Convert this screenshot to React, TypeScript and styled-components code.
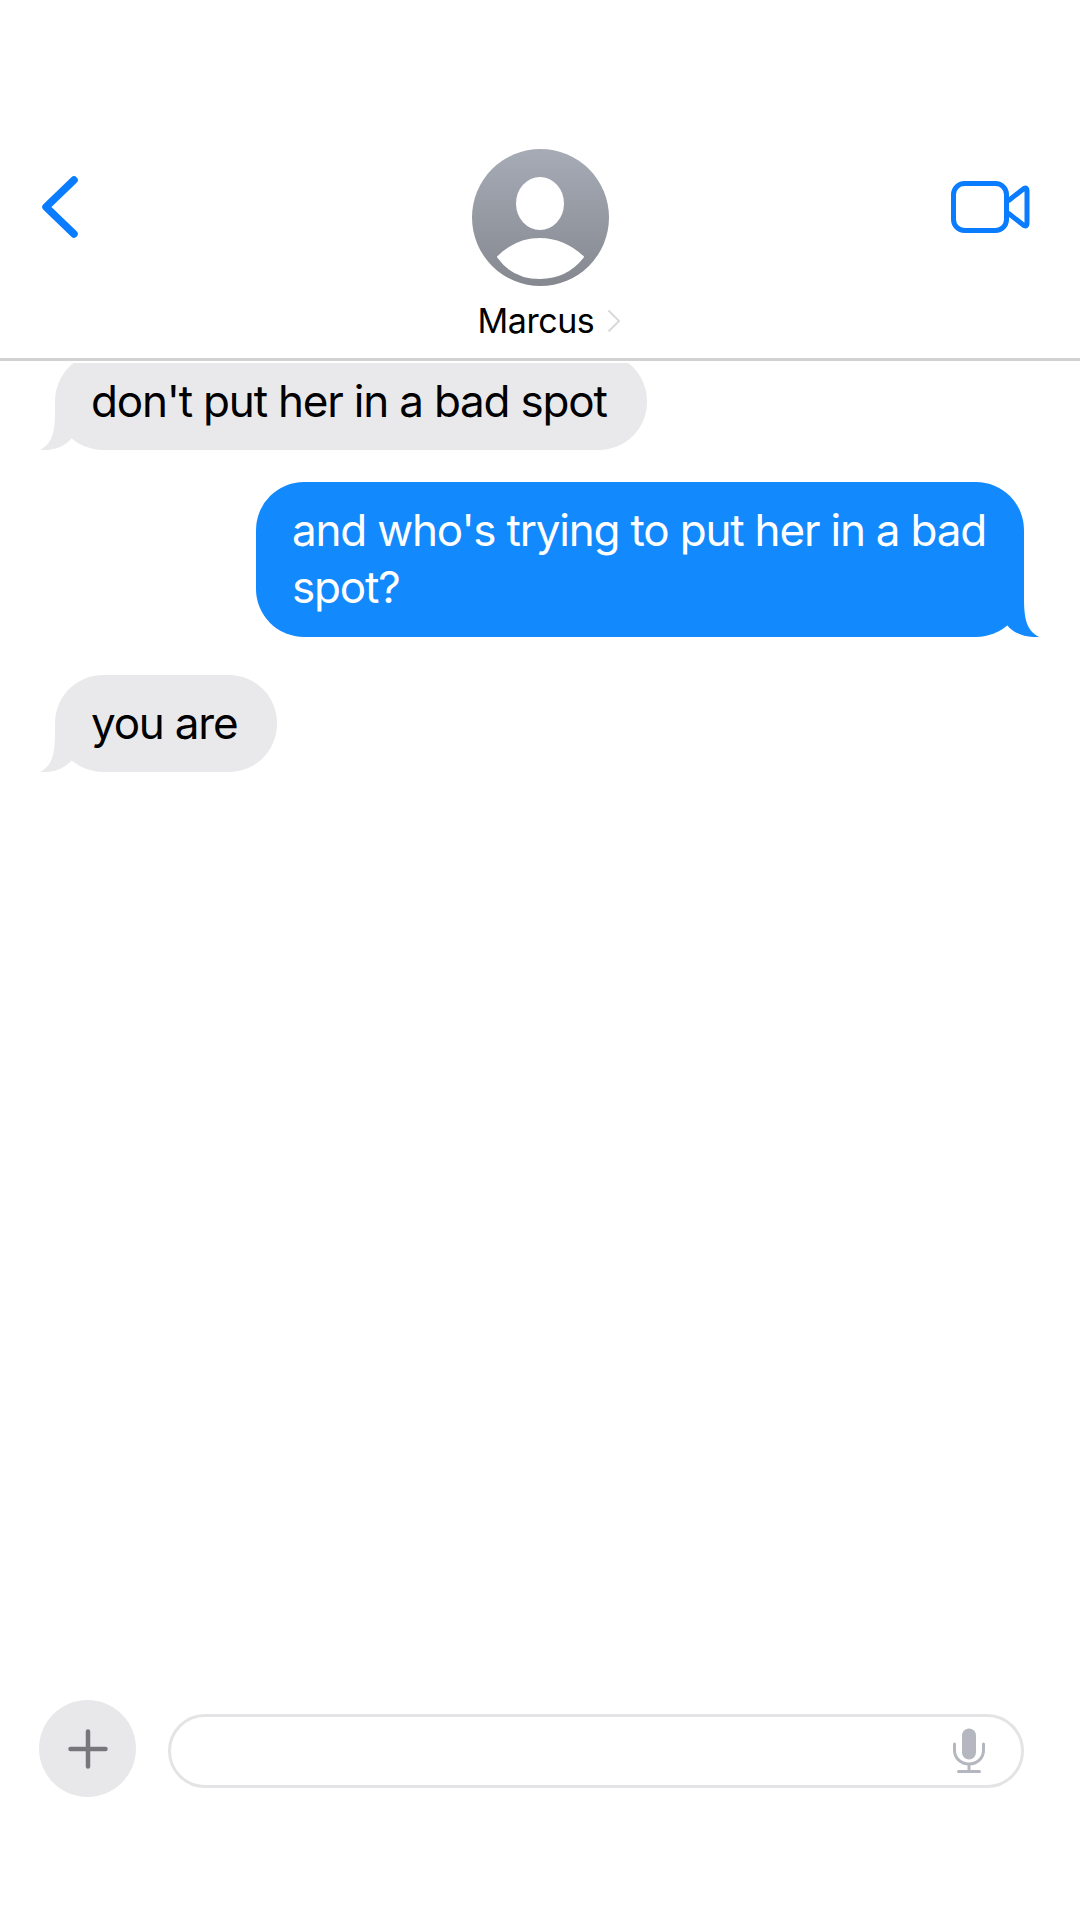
import React from "react";
import styled, { createGlobalStyle } from "styled-components";

const Global = createGlobalStyle`
  html, body { margin: 0; padding: 0; background: #fff; }
  body { font-family: Inter, "Liberation Sans", sans-serif; }
`;

const Screen = styled.main`
  width: 1080px;
  height: 1920px;
  display: flex;
  flex-direction: column;
  background: #fff;
  overflow: hidden;
`;

const Header = styled.header`
  height: 358px;
  box-sizing: border-box;
  padding-top: 149px;
  display: grid;
  grid-template-columns: 1fr 137px 1fr;
  align-items: start;
  flex: none;
`;

const Divider = styled.hr`
  height: 3px;
  margin: 0;
  border: 0;
  background: #d2d2d2;
  flex: none;
`;

const BackButton = styled.button`
  justify-self: start;
  width: 48px;
  height: 70px;
  margin: 23px 0 0 37px;
  padding: 0;
  border: 0;
  background: none;
  display: block;
`;

const VideoButton = styled.button`
  justify-self: end;
  width: 84px;
  height: 58px;
  margin: 28px 49px 0 0;
  padding: 0;
  border: 0;
  background: none;
  display: block;
`;

const Icon = styled.svg`
  display: block;
`;

const Contact = styled.div`
  display: flex;
  flex-direction: column;
`;

const Avatar = styled.div`
  width: 137px;
  height: 137px;
  border-radius: 50%;
  background: linear-gradient(180deg, #a6abb6 0%, #85888f 100%);
  overflow: hidden;
`;

const NameRow = styled.div`
  display: flex;
  align-items: center;
  margin: 15px 0 0 6px;
  height: 40px;
  white-space: nowrap;
`;

const Name = styled.span`
  font-size: 34px;
  letter-spacing: -0.45px;
  line-height: 40px;
  color: #000;
`;

const Chevron = styled.svg`
  display: block;
  margin-left: 13px;
  flex: none;
`;

const Thread = styled.section`
  flex: 1;
  min-height: 0;
  overflow: hidden;
  margin-top: 2px;
  display: flex;
  flex-direction: column;
`;

const Bubble = styled.div<{ $mine?: boolean; $gap: number }>`
  position: relative;
  flex: none;
  box-sizing: border-box;
  max-width: 768px;
  margin-top: ${(p) => p.$gap}px;
  padding: 20px ${(p) => (p.$mine ? 38 : 40)}px ${(p) => (p.$mine ? 21 : 20)}px 36px;
  border-radius: 48px;
  align-self: ${(p) => (p.$mine ? "flex-end" : "flex-start")};
  margin-left: ${(p) => (p.$mine ? 0 : 55)}px;
  margin-right: ${(p) => (p.$mine ? 56 : 0)}px;
  background: ${(p) => (p.$mine ? "#1389fe" : "#e9e9eb")};
  color: ${(p) => (p.$mine ? "#fff" : "#000")};
  font-size: 44px;
  letter-spacing: -1.2px;
  line-height: 57px;
`;

const Tail = styled.svg<{ $mine?: boolean }>`
  position: absolute;
  bottom: 0;
  width: 40px;
  height: 48px;
  ${(p) => (p.$mine ? "right: -15px; transform: scaleX(-1);" : "left: -15px;")}
`;

const Composer = styled.footer`
  flex: none;
  height: 220px;
  box-sizing: border-box;
  padding: 0 56px 0 39px;
  display: flex;
  align-items: flex-start;
  gap: 32px;
`;

const AddButton = styled.button`
  width: 97px;
  height: 97px;
  flex: none;
  padding: 0;
  border: 0;
  border-radius: 50%;
  background: #e8e8ea;
  display: flex;
  align-items: center;
  justify-content: center;
`;

const Field = styled.div`
  flex: 1;
  height: 74px;
  margin-top: 14px;
  box-sizing: border-box;
  border: 3px solid #e4e4e6;
  border-radius: 37px;
  background: #fff;
  display: flex;
  align-items: center;
  justify-content: flex-end;
  padding-right: 36px;
`;

function BubbleTail({ color, mine }: { color: string; mine?: boolean }) {
  return (
    <Tail $mine={mine} viewBox="0 0 40 48">
      <path
        d="M15 0 C15 24 15.5 40 0 48 C11 48.6 24 46 32 36 L40 28 L40 0 Z"
        fill={color}
      />
    </Tail>
  );
}

export default function App() {
  return (
    <Screen>
      <Global />
      <Header>
        <BackButton aria-label="Back">
          <Icon width="48" height="70" viewBox="0 0 48 70">
            <path
              d="M37 8 L9 35 L37 62"
              fill="none"
              stroke="#0a7cff"
              strokeWidth="7.5"
              strokeLinecap="round"
              strokeLinejoin="round"
            />
          </Icon>
        </BackButton>
        <Contact>
          <Avatar>
            <Icon width="137" height="137" viewBox="0 0 137 137">
              <ellipse cx="68" cy="54.5" rx="24" ry="26.5" fill="#fff" />
              <path
                d="M26 108 C38 96 52 90 68 90 C84 90 98 96 111 108 C100 122 85 129 68 129 C51 129 36 122 26 108 Z"
                fill="#fff"
                stroke="#fff"
                strokeWidth="2"
                strokeLinejoin="round"
              />
            </Icon>
          </Avatar>
          <NameRow>
            <Name>Marcus</Name>
            <Chevron width="14" height="24" viewBox="0 0 14 24">
              <path d="M1.5 1.5 L12 12 L1.5 22.5" fill="none" stroke="#d9d9d9" strokeWidth="2" />
            </Chevron>
          </NameRow>
        </Contact>
        <VideoButton aria-label="Video call">
          <Icon width="84" height="58" viewBox="0 0 84 58">
            <rect x="6.5" y="6.5" width="53" height="47" rx="11" fill="none" stroke="#0a7cff" strokeWidth="5" />
            <path
              d="M61 24 L77 11.5 Q80 10 80 13.5 V46.5 Q80 50 77 48.5 L61 36"
              fill="none"
              stroke="#0a7cff"
              strokeWidth="5"
              strokeLinejoin="round"
            />
          </Icon>
        </VideoButton>
      </Header>
      <Divider />
      <Thread>
        <Bubble $gap={-10}>
          don't put her in a bad spot
          <BubbleTail color="#e9e9eb" />
        </Bubble>
        <Bubble $mine $gap={32}>
          and who's trying to put her in a bad spot?
          <BubbleTail mine color="#1389fe" />
        </Bubble>
        <Bubble $gap={38}>
          you are
          <BubbleTail color="#e9e9eb" />
        </Bubble>
      </Thread>
      <Composer>
        <AddButton aria-label="Add">
          <Icon width="40" height="40" viewBox="0 0 40 40">
            <path d="M20 2.5 V37.5 M2.5 20 H37.5" fill="none" stroke="#77777b" strokeWidth="4.5" strokeLinecap="round" />
          </Icon>
        </AddButton>
        <Field>
          <Icon width="32" height="46" viewBox="0 0 32 46">
            <rect x="9" y="0.5" width="14" height="31" rx="7" fill="#b4b7bf" />
            <path
              d="M1.5 16 V22 C1.5 30.5 8 36 16 36 C24 36 30.5 30.5 30.5 22 V16 M16 36 V43.5 M5.5 43.5 H26.5"
              fill="none"
              stroke="#b4b7bf"
              strokeWidth="3"
              strokeLinecap="round"
            />
          </Icon>
        </Field>
      </Composer>
    </Screen>
  );
}
